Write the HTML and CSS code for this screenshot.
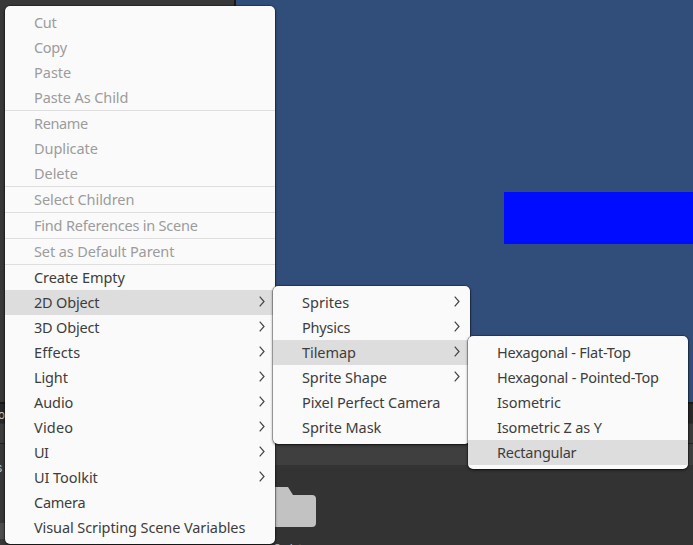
FILE: index.html
```
<!DOCTYPE html>
<html lang="en">
<head>
<meta charset="utf-8">
<title>Hierarchy context menu</title>
<link rel="stylesheet" href="styles.css">
</head>
<body>
<div class="editor">
  <div class="top">
    <div class="hierarchy"></div>
    <div class="game"><div class="sprite"></div></div>
  </div>
  <div class="tabs"><span>o</span></div>
  <div class="toolbar"></div>
  <div class="project">
    <div class="tree"><span>s</span><div class="tree-selected"></div></div>
    <div class="assets">
      <div class="breadcrumb"></div>
      <svg class="folder" width="60" height="40" viewBox="0 0 60 40"><path d="M0 0H32L37 8H56Q60 8 60 12V36Q60 40 56 40H0Z" fill="#c2c2c2"/></svg>
      <div class="asset-name">Scripts</div>
    </div>
  </div>
</div>

<nav class="menu menu-main">
  <div class="item off"><span data-width="23">Cut</span></div>
  <div class="item off"><span data-width="33.5">Copy</span></div>
  <div class="item off"><span data-width="38">Paste</span></div>
  <div class="item off"><span data-width="95">Paste As Child</span></div>
  <hr>
  <div class="item off"><span data-width="54.5">Rename</span></div>
  <div class="item off"><span data-width="64.5">Duplicate</span></div>
  <div class="item off"><span data-width="44.5">Delete</span></div>
  <hr>
  <div class="item off"><span data-width="101">Select Children</span></div>
  <hr>
  <div class="item off"><span data-width="164.5">Find References in Scene</span></div>
  <hr>
  <div class="item off"><span data-width="141">Set as Default Parent</span></div>
  <hr>
  <div class="item"><span data-width="91.5">Create Empty</span></div>
  <div class="item on"><span data-width="66">2D Object</span><svg class="arrow" viewBox="0 0 6 11"><path d="M.7 .7L5 5.5L.7 10.3"/></svg></div>
  <div class="item"><span data-width="66">3D Object</span><svg class="arrow" viewBox="0 0 6 11"><path d="M.7 .7L5 5.5L.7 10.3"/></svg></div>
  <div class="item"><span data-width="47">Effects</span><svg class="arrow" viewBox="0 0 6 11"><path d="M.7 .7L5 5.5L.7 10.3"/></svg></div>
  <div class="item"><span data-width="34.5">Light</span><svg class="arrow" viewBox="0 0 6 11"><path d="M.7 .7L5 5.5L.7 10.3"/></svg></div>
  <div class="item"><span data-width="40">Audio</span><svg class="arrow" viewBox="0 0 6 11"><path d="M.7 .7L5 5.5L.7 10.3"/></svg></div>
  <div class="item"><span data-width="40">Video</span><svg class="arrow" viewBox="0 0 6 11"><path d="M.7 .7L5 5.5L.7 10.3"/></svg></div>
  <div class="item"><span data-width="15">UI</span><svg class="arrow" viewBox="0 0 6 11"><path d="M.7 .7L5 5.5L.7 10.3"/></svg></div>
  <div class="item"><span data-width="64.5">UI Toolkit</span><svg class="arrow" viewBox="0 0 6 11"><path d="M.7 .7L5 5.5L.7 10.3"/></svg></div>
  <div class="item"><span data-width="52">Camera</span></div>
  <div class="item"><span data-width="212">Visual Scripting Scene Variables</span></div>
</nav>

<nav class="menu menu-2d">
  <div class="item"><span data-width="48">Sprites</span><svg class="arrow" viewBox="0 0 6 11"><path d="M.7 .7L5 5.5L.7 10.3"/></svg></div>
  <div class="item"><span data-width="49">Physics</span><svg class="arrow" viewBox="0 0 6 11"><path d="M.7 .7L5 5.5L.7 10.3"/></svg></div>
  <div class="item on"><span data-width="54.5">Tilemap</span><svg class="arrow" viewBox="0 0 6 11"><path d="M.7 .7L5 5.5L.7 10.3"/></svg></div>
  <div class="item"><span data-width="85.5">Sprite Shape</span><svg class="arrow" viewBox="0 0 6 11"><path d="M.7 .7L5 5.5L.7 10.3"/></svg></div>
  <div class="item"><span data-width="139">Pixel Perfect Camera</span></div>
  <div class="item"><span data-width="80">Sprite Mask</span></div>
</nav>

<nav class="menu menu-tilemap">
  <div class="item"><span data-width="134.5">Hexagonal - Flat-Top</span></div>
  <div class="item"><span data-width="162.5">Hexagonal - Pointed-Top</span></div>
  <div class="item"><span data-width="64.5">Isometric</span></div>
  <div class="item"><span data-width="105.5">Isometric Z as Y</span></div>
  <div class="item on"><span data-width="80">Rectangular</span></div>
</nav>
<script src="labels.js"></script>
</body>
</html>
```
FILE: styles.css
```
* { box-sizing: border-box; }
body {
  margin: 0;
  width: 693px;
  height: 545px;
  overflow: hidden;
  font-family: "Noto Sans", "Open Sans", sans-serif;
}
.editor {
  display: flex;
  flex-direction: column;
  height: 545px;
  overflow: hidden;
  background: #333;
  color: #c4c4c4;
  font: 12px Inter, sans-serif;
}
.top { display: flex; height: 402px; flex: none; }
.hierarchy { width: 236px; background: #383838; border-right: 2px solid #191919; }
.game {
  flex: 1;
  display: flex;
  justify-content: flex-end;
  padding-top: 192px;
  background: #314d79;
}
.sprite { width: 189px; height: 52px; background: #000cff; }
.tabs {
  height: 21px;
  flex: none;
  border-top: 2px solid #191919;
  background: #282828;
  line-height: 22px;
}
.tabs span { margin-left: -2px; }
.toolbar { height: 21px; flex: none; background: #3c3c3c; border-bottom: 1px solid #232323; border-top: 1px solid #303030; }
.project { flex: 1; min-height: 0; display: flex; }
.tree { width: 100px; background: #383838; padding-top: 16px; line-height: 16px; }
.tree span { display: block; margin-left: -4px; height: 63px; }
.tree-selected { height: 16px; background: #4d4d4d; }
.assets { flex: 1; overflow: hidden; }
.breadcrumb { height: 21px; background: #3f3f3f; }
.folder { display: block; margin: 22px 0 0 156px; }
.asset-name { margin: 13px 0 0 174px; line-height: 16px; font-size: 10px; }

.menu {
  position: absolute;
  padding: 4px 0;
  border-radius: 5px;
  background: #fafafa;
  color: #3d3d3d;
  box-shadow: 0 0 0 .5px rgba(0, 0, 0, .45), 0 1px 3px rgba(0, 0, 0, .65);
}
.menu-main { left: 5px; top: 6px; width: 270px; }
.menu-2d { left: 273px; top: 286px; width: 197px; }
.menu-tilemap { left: 468px; top: 336px; width: 220px; }
.menu hr { height: 1px; margin: 0; border: 0; background: #dedede; }
.item {
  display: flex;
  align-items: center;
  justify-content: space-between;
  height: 25px;
  padding: 0 10.5px 0 29px;
  font-size: 14.5px;
  line-height: 25px;
  white-space: nowrap;
}
.off { color: #9c9c9c; }
.on { background: #ddd; }
.arrow {
  width: 6px;
  height: 11px;
  margin-bottom: 2px;
  fill: none;
  stroke: #444;
  stroke-width: 1.2;
}
```
FILE: labels.js
```
document.querySelectorAll("[data-width]").forEach(function (label) {
  var gap = Number(label.dataset.width) - 0.7 - label.getBoundingClientRect().width;
  label.style.letterSpacing = gap / label.textContent.length + "px";
});
```
